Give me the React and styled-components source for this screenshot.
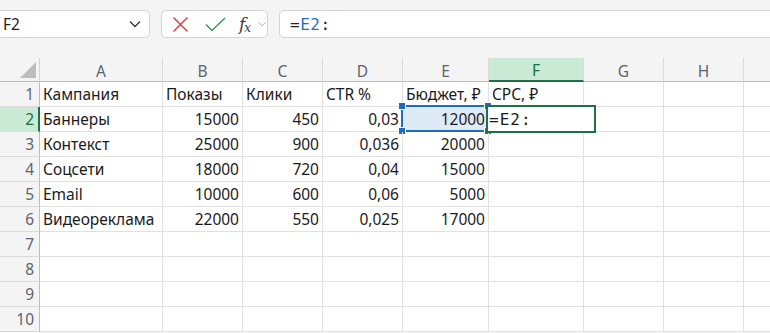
import React from "react";
import styled, { createGlobalStyle } from "styled-components";

const Global = createGlobalStyle`
  html, body { margin: 0; padding: 0; }
  body {
    background: #f4f4f4;
    overflow: hidden;
    font-family: "Noto Sans", "Open Sans", sans-serif;
    width: 770px;
    height: 333px;
  }
`;

const Page = styled.div`
  width: 770px;
  height: 333px;
  overflow: hidden;
  display: flex;
  flex-direction: column;
`;

const Toolbar = styled.div`
  flex-shrink: 0;
  display: flex;
  align-items: stretch;
  gap: 11px;
  height: 28px;
  padding: 10px 0 20px 0;
  margin-left: -10px;
  margin-right: -10px;
`;

const Box = styled.div`
  background: #ffffff;
  border: 1px solid #d4d4d4;
  border-radius: 5px;
  box-sizing: border-box;
  display: flex;
  align-items: center;
`;

const NameBox = styled(Box)`
  width: 160px;
  padding-left: 12px;
  padding-right: 8px;
  justify-content: space-between;
  font-size: 15.5px;
  color: #222;
`;

const Buttons = styled(Box)`
  width: 107px;
  padding-left: 10px;
`;

const IconSlot = styled.span`
  display: inline-flex;
  align-items: center;
  justify-content: center;
  width: ${(p) => p.$w}px;
  margin-left: ${(p) => p.$ml || 0}px;
  height: 100%;
`;

const Fx = styled.span`
  font-family: "DejaVu Serif", "Liberation Serif", serif;
  font-style: italic;
  font-size: 17px;
  color: #3a3a3a;
  letter-spacing: -1px;
  & sub {
    font-size: 12px;
    font-style: italic;
    vertical-align: -2px;
  }
`;

const Input = styled(Box)`
  flex: 1;
  padding-left: 10px;
  font-family: "DejaVu Sans Mono", "Liberation Mono", monospace;
  font-size: 16px;
  letter-spacing: 0.5px;
  color: #222;
`;

const Ref = styled.span`
  color: #1f6fc5;
`;

const Grid = styled.div`
  flex-shrink: 0;
  display: grid;
  grid-template-columns: 40px 123px 80px 80px 80px 86px 95px 80px 80px 80px;
  grid-template-rows: 24px;
  grid-auto-rows: 25px;
  background: #ffffff;
`;

const Corner = styled.div`
  background: #f4f4f4;
  border-right: 1px solid #d4d4d4;
  border-bottom: 1px solid #bdbdbd;
  box-sizing: border-box;
  display: flex;
  align-items: flex-end;
  justify-content: flex-end;
  padding: 0 3px 3px 0;
`;

const Triangle = styled.div`
  width: 16px;
  height: 16px;
  background: #bdbdbd;
  clip-path: polygon(100% 0, 100% 100%, 0 100%);
`;

const ColHead = styled.div`
  background: ${(p) => (p.$active ? "#caead6" : "#f4f4f4")};
  border-right: 1px solid #dadada;
  border-bottom: ${(p) => (p.$active ? "2px solid #1e7145" : "1px solid #bdbdbd")};
  box-sizing: border-box;
  display: flex;
  align-items: center;
  justify-content: center;
  font-size: 15.5px;
  color: ${(p) => (p.$active ? "#1e6e42" : "#5d6470")};
  padding-top: 2px;
`;

const RowHead = styled.div`
  background: ${(p) => (p.$active ? "#caead6" : "#f4f4f4")};
  border-right: ${(p) => (p.$active ? "2px solid #1e7145" : "1px solid #bdbdbd")};
  border-bottom: 1px solid #dadada;
  box-sizing: border-box;
  display: flex;
  align-items: center;
  justify-content: flex-end;
  padding-right: ${(p) => (p.$active ? "4px" : "5px")};
  font-size: 15.5px;
  color: ${(p) => (p.$active ? "#1e6e42" : "#5d6470")};
`;

const Cell = styled.div`
  position: relative;
  border-right: 1px solid #e1e1e1;
  border-bottom: 1px solid #e1e1e1;
  box-sizing: border-box;
  display: flex;
  align-items: center;
  justify-content: ${(p) => (p.$num ? "flex-end" : "flex-start")};
  padding: 0 3px;
  font-size: 15.5px;
  color: #1b1b1b;
  white-space: nowrap;
  background: ${(p) => (p.$sel ? "#dfeaf7" : "transparent")};
`;

const SelBox = styled.div`
  position: absolute;
  left: -2px;
  top: -2px;
  right: -1px;
  bottom: -1px;
  border: 2px solid #1d6bc3;
  pointer-events: none;
`;

const Handle = styled.span`
  position: absolute;
  width: 6px;
  height: 6px;
  background: #1d6bc3;
  border: 1px solid #ffffff;
  ${(p) => (p.$top ? "top: -5px;" : "bottom: -5px;")}
  ${(p) => (p.$left ? "left: -5px;" : "right: -5px;")}
`;

const EditBox = styled.div`
  position: absolute;
  left: -3px;
  top: -2px;
  width: 110px;
  height: 28px;
  box-sizing: border-box;
  border: 2px solid #1e7145;
  background: #ffffff;
  display: flex;
  align-items: center;
  padding-left: 1px;
  font-family: "DejaVu Sans Mono", "Liberation Mono", monospace;
  font-size: 16px;
  letter-spacing: 1px;
  color: #1b1b1b;
  z-index: 2;
`;

const Dashed = styled.div`
  position: absolute;
  left: 0;
  right: 0;
  bottom: -2px;
  border-top: 2px dashed #e0352b;
  z-index: 1;
`;

const cols = ["A", "B", "C", "D", "E", "F", "G", "H", "I"];

const data = [
  ["Кампания", "Показы", "Клики", "CTR %", "Бюджет, ₽", "CPC, ₽"],
  ["Баннеры", 15000, 450, "0,03", 12000, ""],
  ["Контекст", 25000, 900, "0,036", 20000],
  ["Соцсети", 18000, 720, "0,04", 15000],
  ["Email", 10000, 600, "0,06", 5000],
  ["Видеореклама", 22000, 550, "0,025", 17000],
];

export default function App() {
  const rows = [];
  for (let r = 1; r <= 10; r++) {
    const rowData = data[r - 1] || [];
    rows.push(
      <RowHead key={`rh${r}`} $active={r === 2}>
        {r}
      </RowHead>
    );
    cols.forEach((c, ci) => {
      const v = rowData[ci];
      const isNum = r > 1 && (typeof v === "number" || (typeof v === "string" && /^[0-9,]+$/.test(v)));
      const isE2 = r === 2 && c === "E";
      const isF2 = r === 2 && c === "F";
      rows.push(
        <Cell key={`${c}${r}`} $num={isNum} $sel={isE2}>
          {isF2 ? null : v}
          {isE2 && (
            <SelBox>
              <Handle $top $left />
              <Handle $top />
              <Handle $left />
              <Handle />
            </SelBox>
          )}
          {isF2 && (
            <>
              <Dashed />
              <EditBox>=E2:</EditBox>
            </>
          )}
        </Cell>
      );
    });
  }

  return (
    <Page>
      <Global />
      <Toolbar>
        <NameBox>
          <span>F2</span>
          <svg width="12" height="8" viewBox="0 0 12 8">
            <polyline points="1,1.5 6,6.5 11,1.5" fill="none" stroke="#333" strokeWidth="1.3" />
          </svg>
        </NameBox>
        <Buttons>
          <IconSlot $w={17}>
            <svg width="17" height="17" viewBox="0 0 17 17">
              <path d="M1.5 1.5 L15.5 15.5 M15.5 1.5 L1.5 15.5" stroke="#e0413d" strokeWidth="1.5" fill="none" />
            </svg>
          </IconSlot>
          <IconSlot $w={21} $ml={16}>
            <svg width="21" height="15" viewBox="0 0 21 15">
              <path d="M1 7.5 L7 13.5 L20 1" stroke="#3c9a4f" strokeWidth="1.5" fill="none" />
            </svg>
          </IconSlot>
          <IconSlot $w={15} $ml={11}>
            <Fx>
              f<sub>x</sub>
            </Fx>
          </IconSlot>
          <IconSlot $w={8} $ml={6}>
            <svg width="8" height="5" viewBox="0 0 8 5">
              <polyline points="0.5,0.5 4,4 7.5,0.5" fill="none" stroke="#b5b5b5" strokeWidth="1" />
            </svg>
          </IconSlot>
        </Buttons>
        <Input>
          =<Ref>E2</Ref>:
        </Input>
      </Toolbar>
      <Grid>
        <Corner>
          <Triangle />
        </Corner>
        {cols.map((c) => (
          <ColHead key={c} $active={c === "F"}>
            {c === "I" ? null : c}
          </ColHead>
        ))}
        {rows}
      </Grid>
    </Page>
  );
}
